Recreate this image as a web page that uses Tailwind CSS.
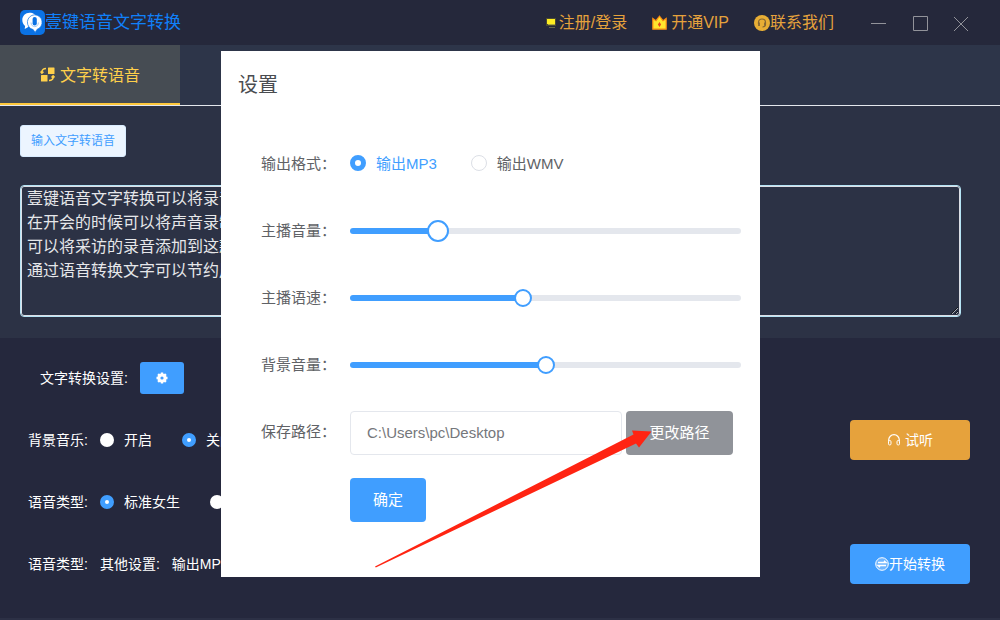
<!DOCTYPE html>
<html lang="zh-CN">
<head>
    <meta charset="UTF-8">
    <meta name="viewport" content="width=device-width, initial-scale=1.0">
    <title>壹键语音文字转换</title>
    <script src="https://cdn.jsdelivr.net/npm/@tailwindcss/browser@4"></script>
</head>
<body class="relative flex min-h-screen flex-col bg-[#25283b] font-['Liberation_Sans','Noto_Sans_CJK_SC',sans-serif] text-sm text-white">

    <!-- Title bar -->
    <header class="flex h-[45px] items-center bg-[#25283b] pr-8 pl-5 text-base text-[#e6a23c]">
        <svg class="size-[25px]" viewBox="0 0 25 25">
            <rect width="25" height="25" rx="5" fill="#0b72e4"/>
            <path d="M9.500 2.700c3.800 0 6.600 2 7.300 5L7.500 17.600l-2.800 1.400.4-3C3.300 14.500 2.300 12.400 2.300 10c0-4.200 3.200-7.300 7.200-7.300z" fill="#fff"/>
            <path d="M14.600 4.800a7.500 7.500 0 0 1 2.400 14.600l-1.900 3-1.900-2.800A7.500 7.500 0 0 1 14.600 4.800z" fill="#fff" stroke="#0b72e4" stroke-width=".7"/>
            <rect x="12.600" y="7" width="4.200" height="8.500" rx="2.100" fill="#0b72e4"/>
            <path d="M11 12.500c0 5.500 7.400 5.500 7.400 0" fill="none" stroke="#8dbcf2" stroke-width=".8"/>
        </svg>
        <h1 class="pt-px text-[17px] text-[#1080fa]">壹键语音文字转换</h1>

        <nav class="ml-auto flex items-center gap-[25px]">
            <a href="#" class="flex items-center gap-0.5">
                <svg class="h-3 w-3" viewBox="0 0 12 12">
                    <rect x="1" y="1" width="10" height="8" fill="#4a4a32"/>
                    <rect x="2" y="2" width="8" height="5" fill="#ffee22"/>
                    <rect x="3" y="7" width="7" height="1" fill="#b0ab3c"/>
                    <rect x="4" y="10" width="6" height="1" fill="#66684a"/>
                </svg>
                注册/登录
            </a>
            <a href="#" class="flex items-center gap-1">
                <svg class="size-[15px]" viewBox="0 0 15 15">
                    <path d="M.8 3.500l3.200 2.200L7.500 1.200 11 5.700l3.200-2.200v10.700H.8z" fill="#ffe52e" stroke="#f98a12" stroke-width="1.200"/>
                    <path d="M7.500 7l1.600 2.500-1.600 2.500-1.600-2.500z" fill="#e8461c"/>
                </svg>
                开通VIP
            </a>
            <a href="#" class="flex items-center">
                <svg class="size-4" viewBox="0 0 16 16">
                    <circle cx="8" cy="8" r="8" fill="#e8ae35"/>
                    <path d="M4.500 9V7.500a3.500 3.500 0 0 1 7 0V9c0 2-1.200 3-3 3" fill="none" stroke="#856733" stroke-width="1.200"/>
                    <path d="M5 7.500v3.500M11 7.500v3" stroke="#856733" stroke-width="1.800"/>
                </svg>
                联系我们
            </a>
        </nav>

        <div class="ml-9 flex items-center gap-[26px] text-[#92939a]">
            <button type="button" aria-label="最小化">
                <svg class="block size-4" viewBox="0 0 16 16" stroke="currentColor"><path d="M1 8.500h15"/></svg>
            </button>
            <button type="button" aria-label="最大化">
                <svg class="block size-4" viewBox="0 0 16 16" fill="none" stroke="currentColor"><path d="M1.500 1.500h14v14h-14z"/></svg>
            </button>
            <button type="button" aria-label="关闭">
                <svg class="block h-4 w-3.5" viewBox="0 0 14 16" stroke="currentColor"><path d="M0 2l14 14M14 2L0 16"/></svg>
            </button>
        </div>
    </header>

    <!-- Tabs -->
    <div class="flex h-[61px] border-b border-[#e4e7ed] bg-[#2d3549]">
        <button type="button" class="flex w-[180px] items-center justify-center gap-[5px] border-b-2 border-[#ffc93c] bg-[#464c53] pt-1 text-base text-[#ffd04b]">
            <svg class="-mt-1 size-[15px]" viewBox="0 0 15 15" fill="none" stroke="currentColor" stroke-width="1.500">
                <rect x="8" y=".5" width="6.500" height="6.500" rx=".5" fill="currentColor" stroke="none"/>
                <rect x="1" y="8" width="6.500" height="6.500" rx=".5" fill="currentColor" stroke="none"/>
                <path d="M6 1.500C3.500 1.500 1.800 3 1.800 5.500M.5 4.500l1.400 1.600L3.500 4.700M9 13.500c2.500 0 4.200-1.500 4.200-4M11.500 10.500l1.600-1.600 1.400 1.500"/>
            </svg>
            文字转语音
        </button>
    </div>

    <!-- Text input -->
    <section class="h-[232px] bg-[#2c3245] px-5 pt-[19px]">
        <button type="button" class="block h-8 rounded-[3px] border border-[#d9ecff] bg-[#ecf5ff] px-2.5 text-xs text-[#409eff]">输入文字转语音</button>
        <textarea aria-label="文字内容" class="mt-[29px] ml-px block h-[130px] w-[calc(100%-21px)] rounded-[3px] border border-[#dcdfe6] bg-transparent px-[5px] text-base leading-6 text-[#e6e7ea] outline outline-[#b5e4f5]">壹键语音文字转换可以将录音转换成文字
在开会的时候可以将声音录制下来
可以将采访的录音添加到这款软件中
通过语音转换文字可以节约用户的时间</textarea>
    </section>

    <!-- Conversion options -->
    <section class="flex-1 border-b-2 border-[#2c3045] bg-[#25283d] pt-[9px] pr-[30px] pl-7">
        <div class="flex h-[62px] items-center gap-3 pl-3">
            <span>文字转换设置:</span>
            <button type="button" aria-label="设置" class="flex h-8 w-11 items-center justify-center rounded-[3px] bg-[#409eff]">
                <svg class="size-3" viewBox="0 0 12 12">
                    <circle cx="6" cy="6" r="4.600" fill="#fff"/>
                    <path d="M6 .5v11M.5 6h11M2.100 2.100l7.800 7.800M9.900 2.100L2.100 9.900" stroke="#fff" stroke-width="2.400"/>
                    <circle cx="6" cy="6" r="1.600" fill="#409eff"/>
                </svg>
            </button>
        </div>
        <div class="flex h-[62px] items-center">
            <span class="mr-3">背景音乐:</span>
            <label class="mr-[30px] flex items-center gap-2.5">
                <input type="radio" name="music" class="size-3.5 appearance-none rounded-full bg-white checked:border-5 checked:border-[#409eff]">开启
            </label>
            <label class="flex items-center gap-2.5">
                <input type="radio" name="music" checked class="size-3.5 appearance-none rounded-full bg-white checked:border-5 checked:border-[#409eff]">关闭
            </label>
            <button type="button" class="ml-auto flex h-10 w-[120px] items-center justify-center gap-1 rounded bg-[#e6a23c]">
                <svg class="size-3.5" viewBox="0 0 14 14" fill="none" stroke="#fff">
                    <path d="M1.700 8.500V7a5.300 5.300 0 0 1 10.600 0v1.500" stroke-width="1.200"/>
                    <rect x="1.500" y="7.500" width="2.500" height="4.500" rx="1.200"/>
                    <rect x="10" y="7.500" width="2.500" height="4.500" rx="1.200"/>
                </svg>
                试听
            </button>
        </div>
        <div class="flex h-[62px] items-center">
            <span class="mr-3">语音类型:</span>
            <label class="mr-[30px] flex items-center gap-2.5">
                <input type="radio" name="voice" checked class="size-3.5 appearance-none rounded-full bg-white checked:border-5 checked:border-[#409eff]">标准女生
            </label>
            <label class="flex items-center gap-2.5">
                <input type="radio" name="voice" class="size-3.5 appearance-none rounded-full bg-white checked:border-5 checked:border-[#409eff]">标准男生
            </label>
        </div>
        <div class="flex h-[62px] items-center gap-3">
            <span>语音类型:</span>
            <span>其他设置:</span>
            <span>输出MP3</span>
            <button type="button" class="ml-auto flex h-10 w-[120px] items-center justify-center rounded bg-[#409eff]">
                <svg class="size-3.5" viewBox="0 0 14 14" fill="none" stroke="#fff">
                    <circle cx="7" cy="7" r="6.300" fill="#fff" fill-opacity=".25"/>
                    <path d="M3 5.500h8L9 3.800M11 8.500H3l2 1.700" stroke-width="1.300"/>
                </svg>
                开始转换
            </button>
        </div>
    </section>

    <!-- Settings dialog -->
    <div role="dialog" aria-labelledby="dialogTitle" class="absolute top-[51px] left-[221px] h-[526px] w-[539px] bg-white pr-[19px] pl-10 text-[15px] text-[#606266]">
        <h2 id="dialogTitle" class="-ml-[23px] flex h-[79px] items-start pt-5 text-xl text-[#4a4c50]">设置</h2>

        <div class="grid auto-rows-[67px] grid-cols-[89px_1fr] items-center">
            <span>输出格式<span class="font-['Noto_Sans_CJK_TC',sans-serif]">：</span></span>
            <div class="flex items-center gap-[34px]">
                <label class="flex items-center gap-2.5 text-[#409eff]">
                    <input type="radio" name="format" checked class="size-4 appearance-none rounded-full border border-[#dcdfe6] bg-white checked:border-[5px] checked:border-[#409eff]">输出MP3
                </label>
                <label class="flex items-center gap-2.5">
                    <input type="radio" name="format" class="size-4 appearance-none rounded-full border border-[#dcdfe6] bg-white checked:border-[5px] checked:border-[#409eff]">输出WMV
                </label>
            </div>

            <label for="hostVolume">主播音量<span class="font-['Noto_Sans_CJK_TC',sans-serif]">：</span></label>
            <input type="range" id="hostVolume" value="21" style="--fill: 21%" class="w-full appearance-none bg-transparent [&::-webkit-slider-runnable-track]:h-1.5 [&::-webkit-slider-runnable-track]:rounded-full [&::-webkit-slider-runnable-track]:bg-[linear-gradient(to_right,#409eff_var(--fill),#e4e7ed_var(--fill))] [&::-webkit-slider-thumb]:-mt-2 [&::-webkit-slider-thumb]:size-[22px] [&::-webkit-slider-thumb]:appearance-none [&::-webkit-slider-thumb]:rounded-full [&::-webkit-slider-thumb]:border-2 [&::-webkit-slider-thumb]:border-solid [&::-webkit-slider-thumb]:border-[#409eff] [&::-webkit-slider-thumb]:bg-white">

            <label for="hostSpeed">主播语速<span class="font-['Noto_Sans_CJK_TC',sans-serif]">：</span></label>
            <input type="range" id="hostSpeed" value="44" style="--fill: 44%" class="w-full appearance-none bg-transparent [&::-webkit-slider-runnable-track]:h-1.5 [&::-webkit-slider-runnable-track]:rounded-full [&::-webkit-slider-runnable-track]:bg-[linear-gradient(to_right,#409eff_var(--fill),#e4e7ed_var(--fill))] [&::-webkit-slider-thumb]:-mt-1.5 [&::-webkit-slider-thumb]:size-[18px] [&::-webkit-slider-thumb]:appearance-none [&::-webkit-slider-thumb]:rounded-full [&::-webkit-slider-thumb]:border-2 [&::-webkit-slider-thumb]:border-solid [&::-webkit-slider-thumb]:border-[#409eff] [&::-webkit-slider-thumb]:bg-white">

            <label for="musicVolume">背景音量<span class="font-['Noto_Sans_CJK_TC',sans-serif]">：</span></label>
            <input type="range" id="musicVolume" value="50" style="--fill: 50%" class="w-full appearance-none bg-transparent [&::-webkit-slider-runnable-track]:h-1.5 [&::-webkit-slider-runnable-track]:rounded-full [&::-webkit-slider-runnable-track]:bg-[linear-gradient(to_right,#409eff_var(--fill),#e4e7ed_var(--fill))] [&::-webkit-slider-thumb]:-mt-1.5 [&::-webkit-slider-thumb]:size-[18px] [&::-webkit-slider-thumb]:appearance-none [&::-webkit-slider-thumb]:rounded-full [&::-webkit-slider-thumb]:border-2 [&::-webkit-slider-thumb]:border-solid [&::-webkit-slider-thumb]:border-[#409eff] [&::-webkit-slider-thumb]:bg-white">

            <label for="savePath">保存路径<span class="font-['Noto_Sans_CJK_TC',sans-serif]">：</span></label>
            <div class="flex gap-1 pt-0.5 pr-2">
                <input type="text" id="savePath" value="C:\Users\pc\Desktop" class="h-11 min-w-0 flex-1 rounded border border-[#e4e7ed] px-4 text-[#75777b]">
                <button type="button" class="h-11 w-[107px] rounded bg-[#909399] text-white">更改路径</button>
            </div>

            <button type="submit" class="col-start-2 mt-0.5 h-11 w-[76px] rounded bg-[#409eff] text-white">确定</button>
        </div>

        <!-- Pointer to the change path button -->
        <svg class="pointer-events-none absolute top-[379px] left-[154px] h-[138px] w-[277px]" viewBox="0 0 277 138">
            <path d="M0 136.500L258.500 4.500 257 .5 276.500 1.500 264 17.500 261 13.500 .8 137.500z" fill="#ff2412"/>
        </svg>
    </div>

</body>
</html>
